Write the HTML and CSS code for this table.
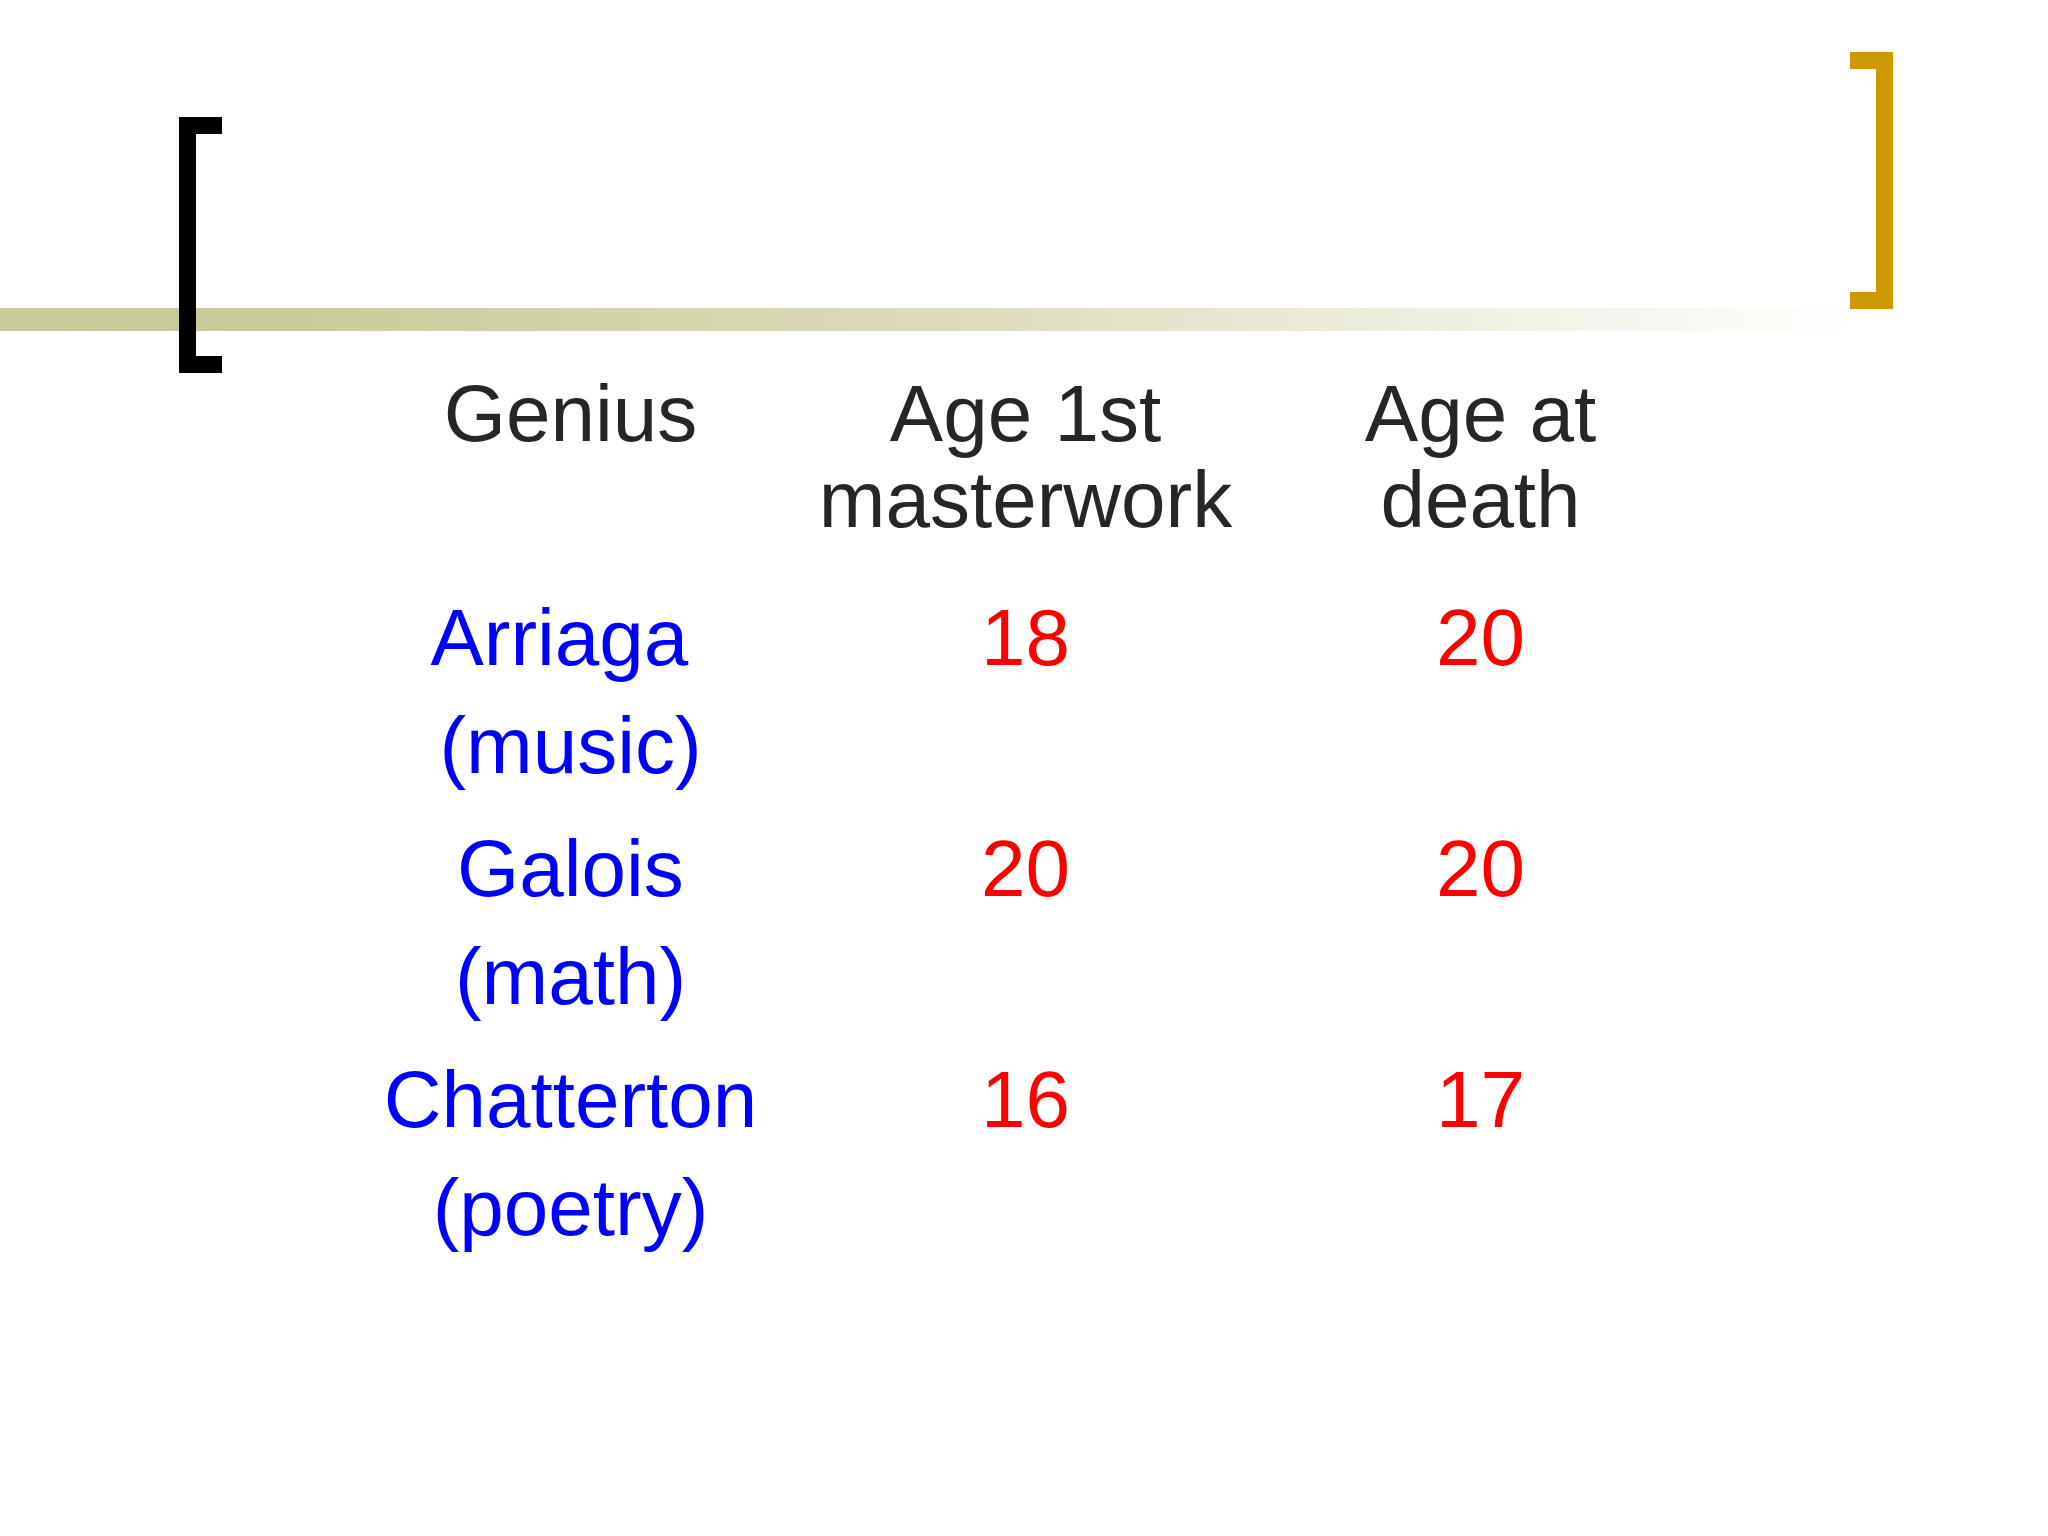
FILE: index.html
```html
<!DOCTYPE html>
<html lang="en">
<head>
<meta charset="utf-8">
<title>Genius table</title>
<link rel="stylesheet" href="styles.css">
</head>
<body>
<div class="slide">
  <div class="title-area"></div>
  <div class="rule"></div>
  <div class="bracket bracket-left"></div>
  <div class="bracket bracket-right"></div>
  <div class="table">
    <div class="cell head">Genius</div>
    <div class="cell head">Age 1st masterwork</div>
    <div class="cell head">Age at death</div>

    <div class="cell name">Arriaga&nbsp;<br>(music)</div>
    <div class="cell num">18</div>
    <div class="cell num">20</div>

    <div class="cell name">Galois<br>(math)</div>
    <div class="cell num">20</div>
    <div class="cell num">20</div>

    <div class="cell name">Chatterton<br>(poetry)</div>
    <div class="cell num">16</div>
    <div class="cell num">17</div>
  </div>
</div>
</body>
</html>
```
FILE: styles.css
```css
html, body {
  margin: 0;
  padding: 0;
  background: #ffffff;
}

.slide {
  position: relative;
  width: 2048px;
  height: 1536px;
  overflow: hidden;
  background: #ffffff;
  font-family: "Liberation Sans", Arial, sans-serif;
}

.title-area {
  height: 308px;
}

.rule {
  height: 23px;
  background: linear-gradient(to right,
    #c8cb98 0px,
    #c9cc9a 300px,
    #d6d6ad 700px,
    #dedbb9 950px,
    #e8e8d2 1250px,
    #f3f3e8 1550px,
    #ffffff 1860px);
}

.bracket {
  position: absolute;
  box-sizing: border-box;
  width: 43px;
}

.bracket-left {
  left: 179px;
  top: 117px;
  height: 256px;
  border-left: 17px solid #000000;
  border-top: 17px solid #000000;
  border-bottom: 17px solid #000000;
}

.bracket-right {
  left: 1850px;
  top: 52px;
  height: 257px;
  border-right: 17px solid #cc9900;
  border-top: 17px solid #cc9900;
  border-bottom: 17px solid #cc9900;
}

.table {
  margin-top: 40px;
  margin-left: 343px;
  display: grid;
  grid-template-columns: 455px 455px 455px;
  row-gap: 15px;
  align-items: start;
}

.cell {
  text-align: center;
  font-size: 80px;
}

.head {
  color: #262626;
  line-height: 86px;
  margin-bottom: 26px;
  padding: 0 20px;
}

.name {
  color: #0000ff;
  line-height: 108px;
}

.num {
  color: #ff0000;
  line-height: 108px;
}
```
